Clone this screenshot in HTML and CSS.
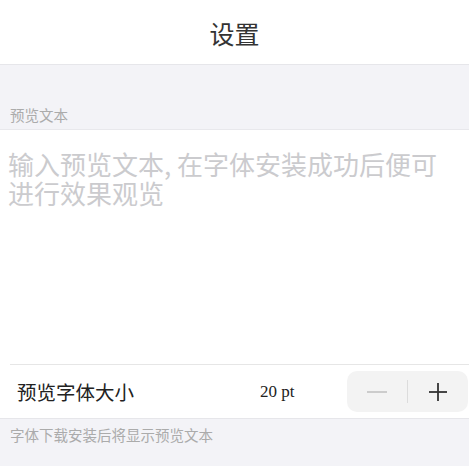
FILE: index.html
```html
<!DOCTYPE html>
<html lang="zh-CN">
<head>
<meta charset="utf-8">
<link rel="stylesheet" href="styles.css">
</head>
<body>
<div class="page">
  <div class="status"></div>
  <header class="nav">
    <h1 class="title">设置</h1>
  </header>
  <div class="section-label">预览文本</div>
  <div class="preview">
    <div class="placeholder">输入预览文本, 在字体安装成功后便可进行效果观览</div>
  </div>
  <div class="row-wrap">
    <div class="row">
      <span class="row-label">预览字体大小</span>
      <span class="row-value">20 pt</span>
      <div class="stepper">
        <span class="step minus"><svg width="22" height="22" viewBox="0 0 22 22"><line x1="1" y1="11" x2="21" y2="11" stroke="#c2c2c2" stroke-width="1.6"/></svg></span>
        <span class="step-div"></span>
        <span class="step plus"><svg width="22" height="22" viewBox="0 0 22 22"><line x1="2" y1="11" x2="20" y2="11" stroke="#333" stroke-width="1.8"/><line x1="11" y1="2" x2="11" y2="20" stroke="#333" stroke-width="1.8"/></svg></span>
      </div>
    </div>
  </div>
  <div class="footer-note">字体下载安装后将显示预览文本</div>
</div>
</body>
</html>
```
FILE: styles.css
```css
html, body {
  margin: 0;
  padding: 0;
}
body {
  width: 469px;
  height: 466px;
  overflow: hidden;
  background: #f3f3f7;
  font-family: "Noto Sans CJK SC", "Noto Sans", sans-serif;
}
.page {
  display: flex;
  flex-direction: column;
  height: 466px;
}
.status {
  height: 3px;
  background: #fff;
}
.nav {
  height: 61px;
  background: #fff;
  border-bottom: 1px solid #e6e6ea;
  display: flex;
  align-items: center;
  justify-content: center;
}
.title {
  margin: 0;
  font-size: 25px;
  font-weight: 400;
  color: #333;
  line-height: 1;
}
.section-label {
  height: 65px;
  box-sizing: border-box;
  display: flex;
  align-items: flex-end;
  padding: 0 0 4px 10px;
  font-size: 14.5px;
  line-height: 20px;
  color: #ababab;
  border-bottom: 1px solid #e8e8ec;
}
.preview {
  height: 234px;
  background: #fff;
  padding: 19px 20px 0 8px;
  box-sizing: border-box;
}
.placeholder {
  font-size: 26px;
  line-height: 29px;
  color: #cbcbce;
}
.row-wrap {
  background: #fff;
  border-bottom: 1px solid #e6e6ea;
}
.row {
  height: 54px;
  margin-left: 10px;
  border-top: 1px solid #e6e6e6;
  display: flex;
  align-items: center;
  box-sizing: border-box;
}
.row-label {
  margin-left: 7px;
  font-size: 19.5px;
  color: #222;
  width: 243px;
}
.row-value {
  font-family: "Liberation Serif", serif;
  font-size: 17px;
  color: #222;
  width: 87px;
}
.stepper {
  width: 121px;
  height: 41px;
  background: #f3f3f3;
  border-radius: 10px;
  display: flex;
  align-items: center;
}
.step {
  width: 60px;
  display: flex;
  justify-content: center;
  align-items: center;
}
.step svg { display: block; }
.step-div {
  width: 1px;
  height: 23px;
  background: #dcdcdc;
}
.footer-note {
  padding: 6px 0 0 10px;
  font-size: 14.5px;
  line-height: 20px;
  color: #ababab;
}
```
